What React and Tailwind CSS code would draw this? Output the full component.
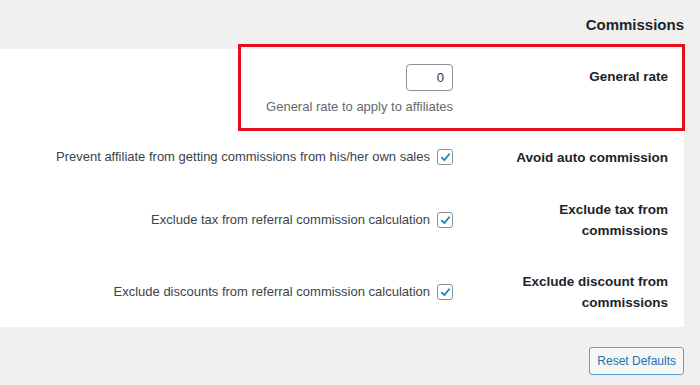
import { useState } from 'react';

function Check({ checked, onChange }) {
  return (
    <button
      onClick={onChange}
      className="w-4 h-4 border border-[#8c8f94] rounded-[3px] bg-white flex items-center justify-center shrink-0"
    >
      {checked && (
        <svg viewBox="0 0 16 16" className="w-[13px] h-[13px]">
          <path d="M3.6 8.3 L6.6 11.3 L12.5 4" fill="none" stroke="#1e8cbe" strokeWidth="2.3" strokeLinecap="round" strokeLinejoin="round" />
        </svg>
      )}
    </button>
  );
}

export default function App() {
  const [rate, setRate] = useState('0');
  const [opts, setOpts] = useState({ auto: true, tax: true, discount: true });

  const toggle = (k) => setOpts(prev => ({ ...prev, [k]: !prev[k] }));

  const rows = [
    { key: 'auto', label: ['Avoid auto commission'], desc: 'Prevent affiliate from getting commissions from his/her own sales', h: 'h-[52px]' },
    { key: 'tax', label: ['Exclude tax from', 'commissions'], desc: 'Exclude tax from referral commission calculation', h: 'h-[74px]' },
    { key: 'discount', label: ['Exclude discount from', 'commissions'], desc: 'Exclude discounts from referral commission calculation', h: 'h-[70px]' },
  ];

  return (
    <div className="w-[700px] h-[385px] bg-[#f0f0f1] text-[#3c434a] overflow-hidden" style={{ fontFamily: '"Liberation Sans", Arial, sans-serif' }}>
      <div className="h-[49px] flex items-end justify-end pr-4 pb-[13px]">
        <h2 className="text-[15px] font-bold text-[#1d2327]">Commissions</h2>
      </div>

      <div className="w-[684px] bg-white h-[278px] relative">
        {/* highlight around the first row */}
        <div className="absolute left-[238px] top-[-5px] w-[447px] h-[87px] border-[3px] border-[#e3101c]" />

        <div className="flex justify-end h-[82px] pt-[15px]">
          <div className="flex flex-col items-end pr-[31px]">
            <input
              value={rate}
              onChange={e => setRate(e.target.value)}
              className="w-[47px] h-[27px] border border-[#8c8f94] rounded-[4px] text-right px-2 text-[13px] text-[#2c3338] outline-none"
            />
            <p className="text-[13px] text-[#646970] mt-[6px]">General rate to apply to affiliates</p>
          </div>
          <div className="w-[200px] pr-[16px] text-right">
            <span className="text-[13.5px] font-bold text-[#1d2327]">General rate</span>
          </div>
        </div>

        {rows.map(row => (
          <div key={row.key} className={`flex justify-end items-center ${row.h}`}>
            <div className="flex items-center gap-[7px] pr-[31px]">
              <span className="text-[13px]">{row.desc}</span>
              <Check checked={opts[row.key]} onChange={() => toggle(row.key)} />
            </div>
            <div className="w-[200px] pr-[16px] text-right text-[13.5px] font-bold text-[#1d2327] leading-[21px]">
              {row.label.map(l => <div key={l}>{l}</div>)}
            </div>
          </div>
        ))}
      </div>

      <div className="flex justify-end pr-4 pt-[20px]">
        <button className="h-[28px] px-[7px] border border-[#5b9dd0] rounded-[3px] bg-[#f6f7f7] text-[#2271b1] text-[12px]">
          Reset Defaults
        </button>
      </div>
    </div>
  );
}
